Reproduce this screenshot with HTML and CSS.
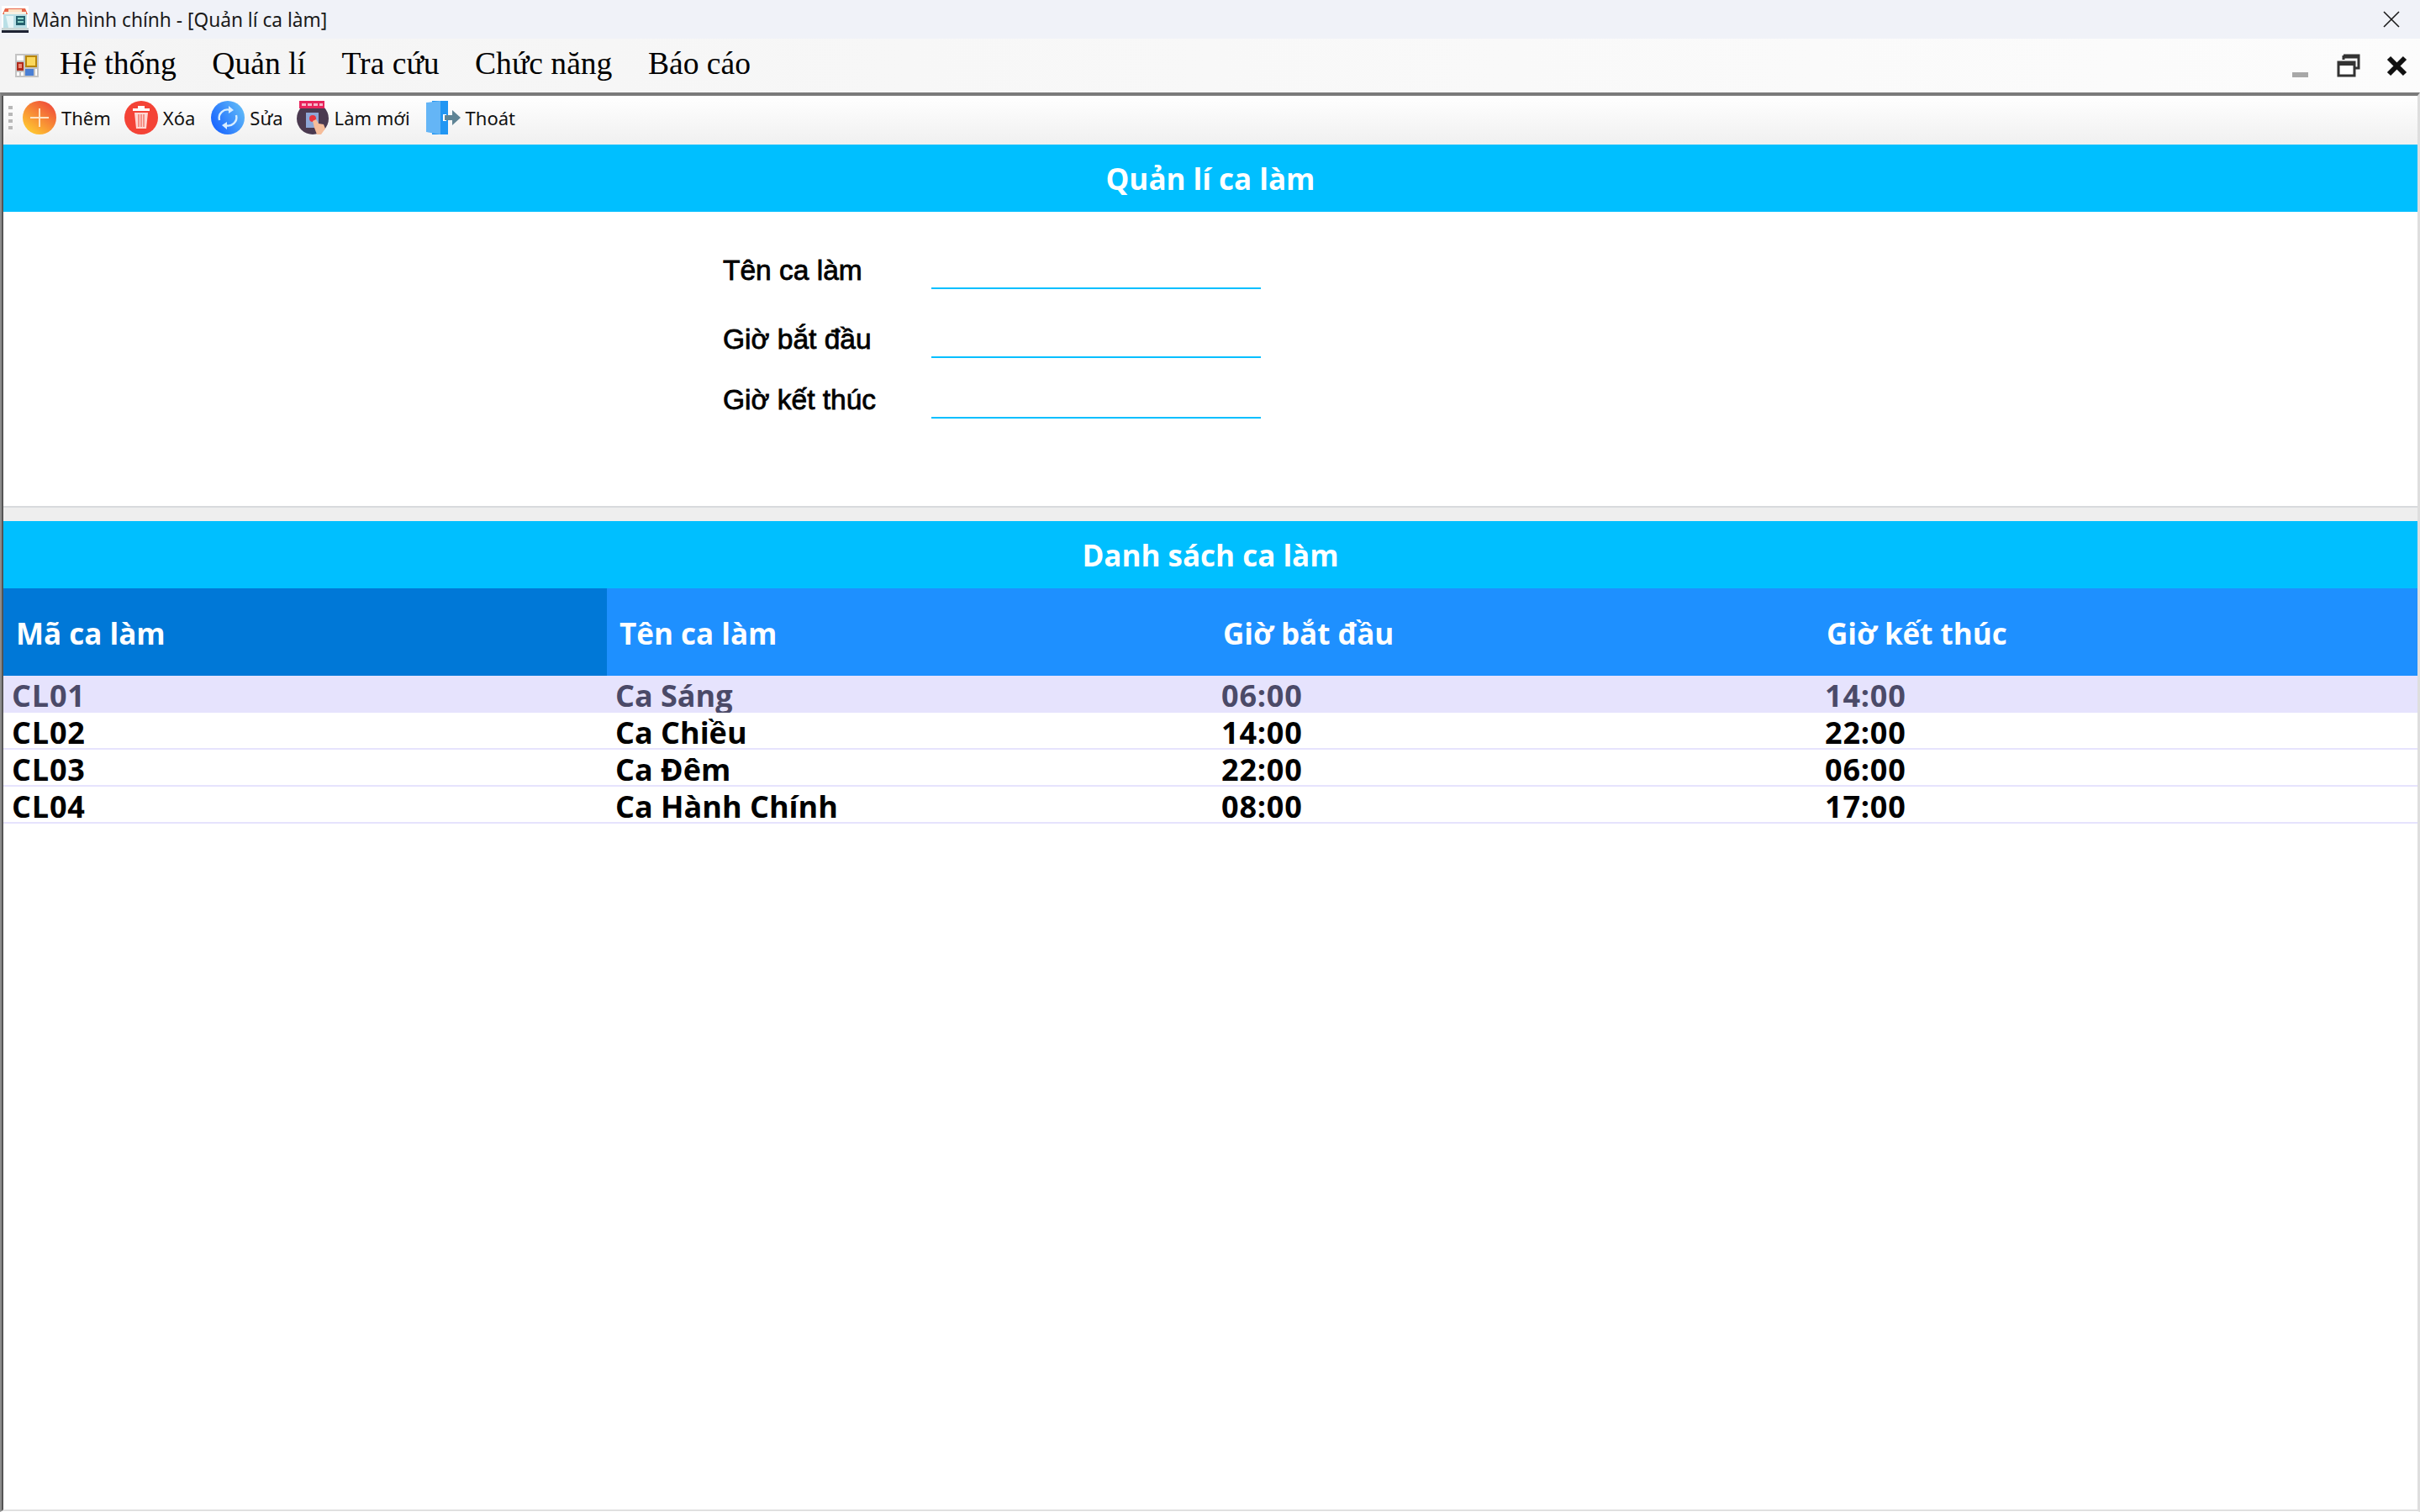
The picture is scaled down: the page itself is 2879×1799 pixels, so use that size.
FILE: index.html
```html
<!DOCTYPE html>
<html lang="vi">
<head>
    <meta charset="UTF-8">
    <title>Màn hình chính - [Quản lí ca làm]</title>
    <link rel="stylesheet" href="styles.css">
</head>
<body>

<div class="titlebar">
    <svg class="app-icon" viewBox="0 0 32 32">
        <rect x="0" y="0" width="32" height="32" fill="#fff"/>
        <rect x="2" y="9" width="28" height="17" fill="#b9dfe6"/>
        <path d="M4 3h24l3 7H1z" fill="#e8674a"/>
        <rect x="8" y="4" width="16" height="3" fill="#fbe3c8"/>
        <rect x="3" y="7" width="26" height="3" fill="#f7f0e2"/>
        <path d="M5 12h9v14H8z" fill="#e6f5f7"/>
        <rect x="17" y="12" width="11" height="11" fill="#23606d"/>
        <rect x="19" y="14" width="7" height="2" fill="#8ad3c9"/>
        <rect x="19" y="18" width="7" height="2" fill="#8ad3c9"/>
        <rect x="0" y="26" width="32" height="3" fill="#c9d6d6"/>
        <rect x="0" y="29" width="32" height="3" fill="#1d2233"/>
    </svg>
    <span class="title-text">Màn hình chính - [Quản lí ca làm]</span>
    <svg class="win-close" viewBox="0 0 20 20">
        <path d="M1 1l18 18M19 1L1 19" stroke="#1a1a1a" stroke-width="1.6" fill="none"/>
    </svg>
</div>

<div class="menubar">
    <svg class="menu-icon" viewBox="0 0 28 28">
        <rect width="28" height="28" fill="#c4c4c4"/>
        <rect x="2" y="2" width="8" height="6" fill="#fff"/>
        <rect x="12" y="2" width="14" height="14" fill="#b8860b"/>
        <rect x="14" y="4" width="10" height="10" fill="#fbd85c"/>
        <rect x="2" y="10" width="8" height="10" fill="#b02a1a"/>
        <rect x="4" y="12" width="4" height="5" fill="#ef8a76"/>
        <rect x="12" y="18" width="10" height="8" fill="#4a7fd4"/>
        <rect x="2" y="22" width="3" height="4" fill="#fff"/>
        <rect x="7" y="22" width="3" height="4" fill="#fff"/>
        <rect x="24" y="18" width="2" height="8" fill="#fff"/>
    </svg>
    <nav class="menu-items">
        <span>Hệ thống</span>
        <span>Quản lí</span>
        <span>Tra cứu</span>
        <span>Chức năng</span>
        <span>Báo cáo</span>
    </nav>
    <div class="child-buttons">
        <span class="child-min"></span>
        <svg class="child-restore" viewBox="0 0 28 28">
            <path d="M8 2h18v15h-5M8 2v5M8 4h18" fill="none" stroke="#333" stroke-width="3"/>
            <rect x="2" y="10" width="19" height="16" fill="#fff" stroke="#333" stroke-width="3"/>
            <rect x="2" y="10" width="19" height="4" fill="#333"/>
        </svg>
        <svg class="child-close" viewBox="0 0 25 25">
            <path d="M3 3l19 19M22 3L3 22" stroke="#111" stroke-width="6" fill="none"/>
        </svg>
    </div>
</div>

<div class="workspace">
    <div class="workspace-inner">

        <div class="toolbar">
            <div class="grip"><i></i><i></i><i></i><i></i></div>

            <button class="tool tool-add">
                <svg viewBox="0 0 40 40">
                    <defs>
                        <linearGradient id="addFill" x1="0.8" y1="0.1" x2="0.2" y2="0.9">
                            <stop offset="0" stop-color="#f0523a"/>
                            <stop offset="1" stop-color="#ffc531"/>
                        </linearGradient>
                    </defs>
                    <circle cx="20" cy="20" r="20" fill="url(#addFill)"/>
                    <path d="M20 9v22M9 20h22" stroke="#ffe3c2" stroke-width="2"/>
                </svg>
                Thêm
            </button>

            <button class="tool tool-delete">
                <svg viewBox="0 0 40 40">
                    <circle cx="20" cy="20" r="20" fill="#f44336"/>
                    <rect x="10" y="9" width="20" height="3" fill="#fff"/>
                    <rect x="16" y="6" width="8" height="3" fill="#fff"/>
                    <path d="M12 14h16l-2 19H14z" fill="#ffd7d2"/>
                    <path d="M17 16v15M20 16v15M23 16v15" stroke="#f2796e" stroke-width="1.5"/>
                </svg>
                Xóa
            </button>

            <button class="tool tool-edit">
                <svg viewBox="0 0 40 40">
                    <defs>
                        <linearGradient id="editFill" x1="0" y1="0.8" x2="1" y2="0.2">
                            <stop offset="0" stop-color="#1560ff"/>
                            <stop offset="1" stop-color="#62bdf8"/>
                        </linearGradient>
                    </defs>
                    <circle cx="20" cy="20" r="20" fill="url(#editFill)"/>
                    <path d="M10 23a10 10 0 0 1 13-12M30 17a10 10 0 0 1-13 12" fill="none" stroke="#d9eeff" stroke-width="2.4"/>
                    <path d="M21 6l6 5-6 4zM19 25l-6 4 6 5z" fill="#d9eeff"/>
                </svg>
                Sửa
            </button>

            <button class="tool tool-refresh">
                <svg viewBox="0 0 40 40">
                    <circle cx="20" cy="21" r="19" fill="#4b3a50"/>
                    <rect x="4" y="0" width="30" height="9" fill="#e8245c"/>
                    <rect x="7" y="3" width="5" height="3" fill="#f6b7c9"/>
                    <rect x="14" y="3" width="5" height="3" fill="#f6b7c9"/>
                    <rect x="21" y="3" width="5" height="3" fill="#f6b7c9"/>
                    <rect x="28" y="3" width="4" height="3" fill="#f6b7c9"/>
                    <rect x="12" y="14" width="15" height="18" fill="#8ea6d6"/>
                    <circle cx="20" cy="21" r="4" fill="#e8363f"/>
                    <path d="M20 24l4-2 3 5 6 1 2 5-5 7h-5l-3-8z" fill="#f6bd9a"/>
                </svg>
                Làm mới
            </button>

            <button class="tool tool-exit">
                <svg viewBox="0 0 41 40">
                    <path d="M7 0h19v40H7z" fill="#2196f3"/>
                    <path d="M0 2l17-2v40L0 37z" fill="#64b5f6"/>
                    <path d="M20 16h4v8h-4z" fill="#fff"/>
                    <path d="M22 17h9v-6l10 9-10 9v-6h-9z" fill="#5f8495"/>
                </svg>
                Thoát
            </button>
        </div>

        <section class="edit-panel">
            <h2 class="band">Quản lí ca làm</h2>
            <form class="shift-form">
                <div class="field field-name">
                    <label for="shiftName">Tên ca làm</label>
                    <input type="text" id="shiftName">
                </div>
                <div class="field field-start">
                    <label for="shiftStart">Giờ bắt đầu</label>
                    <input type="text" id="shiftStart">
                </div>
                <div class="field field-end">
                    <label for="shiftEnd">Giờ kết thúc</label>
                    <input type="text" id="shiftEnd">
                </div>
            </form>
        </section>

        <section class="list-panel">
            <h2 class="band">Danh sách ca làm</h2>
            <table class="shift-table">
                <thead>
                    <tr>
                        <th class="sorted">Mã ca làm</th>
                        <th>Tên ca làm</th>
                        <th>Giờ bắt đầu</th>
                        <th>Giờ kết thúc</th>
                    </tr>
                </thead>
                <tbody>
                    <tr class="selected">
                        <td class="code"><div>CL01</div></td>
                        <td class="name"><div>Ca Sáng</div></td>
                        <td class="time"><div>06:00</div></td>
                        <td class="time"><div>14:00</div></td>
                    </tr>
                    <tr>
                        <td class="code"><div>CL02</div></td>
                        <td class="name"><div>Ca Chiều</div></td>
                        <td class="time"><div>14:00</div></td>
                        <td class="time"><div>22:00</div></td>
                    </tr>
                    <tr>
                        <td class="code"><div>CL03</div></td>
                        <td class="name"><div>Ca Đêm</div></td>
                        <td class="time"><div>22:00</div></td>
                        <td class="time"><div>06:00</div></td>
                    </tr>
                    <tr>
                        <td class="code"><div>CL04</div></td>
                        <td class="name"><div>Ca Hành Chính</div></td>
                        <td class="time"><div>08:00</div></td>
                        <td class="time"><div>17:00</div></td>
                    </tr>
                </tbody>
            </table>
        </section>

    </div>
</div>

</body>
</html>
```

FILE: styles.css
```css
html, body {
    height: 100%;
}
body {
    margin: 0;
    display: flex;
    flex-direction: column;
    background-color: #fff;
    font-family: "Noto Sans", sans-serif;
    overflow: hidden;
}

.titlebar {
    height: 46px;
    flex: none;
    display: flex;
    align-items: center;
    padding: 0 24px 0 2px;
    background-color: #f0f2f8;
}
.app-icon {
    width: 32px;
    height: 32px;
}
.title-text {
    margin: 1px 0 0 4px;
    font-size: 22.7px;
    color: #1a1a1a;
}
.win-close {
    width: 20px;
    height: 20px;
    margin-left: auto;
}

.menubar {
    height: 64px;
    flex: none;
    display: flex;
    align-items: center;
    padding: 0 15px 0 18px;
    background-color: #f7f7f7;
    background-image: linear-gradient(to right, #f4f4f4, #fcfcfc);
}
.menu-icon {
    width: 28px;
    height: 28px;
}
.menu-items {
    display: flex;
    gap: 42.5px;
    margin: 0 0 5px 25px;
    font-family: "Liberation Serif", serif;
    font-size: 37.6px;
    color: #000;
}
.child-buttons {
    display: flex;
    align-items: center;
    margin-left: auto;
}
.child-min {
    width: 19px;
    height: 6px;
    margin-top: 22px;
    background-color: #a8a8a8;
}
.child-restore {
    width: 28px;
    height: 28px;
    margin-left: 34px;
}
.child-close {
    width: 25px;
    height: 25px;
    margin-left: 31px;
}

.workspace {
    flex: 1;
    min-height: 0;
    display: flex;
    border-left: 2px solid #8c8c8c;
    border-top: 4px solid #7a7a7a;
    border-right: 3px solid #dedede;
    border-bottom: 1px solid #fff;
}
.workspace-inner {
    flex: 1;
    min-width: 0;
    display: flex;
    flex-direction: column;
    border-left: 2px solid #555;
    border-bottom: 2px solid #e0e0e0;
}

.toolbar {
    height: 58px;
    flex: none;
    box-sizing: border-box;
    padding-bottom: 6px;
    display: flex;
    align-items: center;
    background-image: linear-gradient(#fff, #f0f0f0);
}
.grip {
    display: flex;
    flex-direction: column;
    gap: 4px;
    margin-left: 6px;
}
.grip i {
    display: block;
    width: 5px;
    height: 4px;
    background-color: #b8b8b8;
}
.tool {
    display: flex;
    align-items: center;
    gap: 6px;
    padding: 0;
    border: none;
    background: none;
    font-family: "Noto Sans", sans-serif;
    font-size: 22px;
    color: #111;
}
.tool svg {
    width: 40px;
    height: 40px;
    flex: none;
}
.tool-add {
    margin-left: 12px;
}
.tool-delete {
    margin-left: 16px;
}
.tool-edit {
    margin-left: 19px;
}
.tool-refresh {
    margin-left: 15px;
}
.tool-exit {
    margin-left: 19px;
}
.tool-exit svg {
    width: 41px;
}

.band {
    height: 80px;
    margin: 0;
    display: flex;
    align-items: center;
    justify-content: center;
    background-color: #00bfff;
    color: #fff;
    font-family: "Open Sans", sans-serif;
    font-size: 35px;
    font-weight: 700;
}

.edit-panel {
    height: 432px;
    flex: none;
    background-color: #fff;
    border-bottom: 2px solid #d8dadd;
    box-sizing: border-box;
}
.shift-form {
    padding: 48px 0 0 856px;
}
.field {
    display: flex;
    align-items: flex-end;
    height: 44px;
}
.field-start {
    margin-top: 38px;
}
.field-end {
    margin-top: 28px;
}
.field label {
    width: 248px;
    flex: none;
    line-height: 44px;
    font-family: "Liberation Sans", sans-serif;
    font-size: 33.5px;
    color: #000;
    -webkit-text-stroke: 0.8px #000;
}
.field input {
    width: 392px;
    height: 44px;
    box-sizing: border-box;
    padding: 0;
    border: none;
    border-bottom: 2px solid #00bfff;
    background: none;
    outline: none;
}

.list-panel {
    flex: 1;
    min-height: 0;
    padding-top: 16px;
    background-color: #eee;
    display: flex;
    flex-direction: column;
}
.shift-table {
    flex: 1;
    width: 100%;
    display: block;
    background-color: #fff;
    border-collapse: collapse;
    table-layout: fixed;
    font-family: "Open Sans", sans-serif;
}
.shift-table th, .shift-table td {
    width: 718px;
    min-width: 718px;
    padding: 0;
    text-align: left;
}
.shift-table th {
    height: 104px;
    padding: 3px 0 0 15px;
    box-sizing: border-box;
    background-color: #1e90ff;
    color: #fff;
    font-size: 35px;
    font-weight: 700;
}
.shift-table th.sorted {
    background-color: #0078d7;
}
.shift-table td div {
    height: 44px;
    padding: 6px 0 0 11px;
    box-sizing: border-box;
    font-size: 36px;
    font-weight: 700;
    line-height: 36px;
    color: #000;
}
.shift-table td.code div {
    padding-left: 10px;
    letter-spacing: 0.8px;
}
.shift-table td.name div {
    padding-left: 10px;
}
.shift-table td.time div {
    padding-left: 13px;
    letter-spacing: 0.8px;
}
.shift-table tbody tr:not(.selected) td div {
    border-bottom: 2px solid #e6e3fd;
}
.selected td {
    background-color: #e6e3fd;
}
.shift-table .selected td div {
    overflow: hidden;
    color: #4b4a68;
}
```
